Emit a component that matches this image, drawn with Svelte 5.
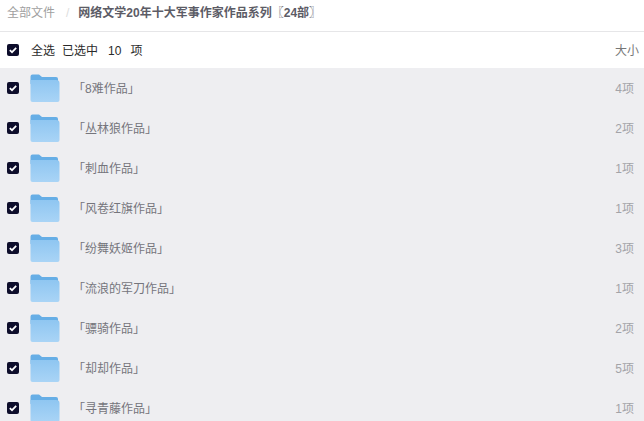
<script lang="ts">
	const rows = [
		{ name: '「8难作品」', size: '4项' },
		{ name: '「丛林狼作品」', size: '2项' },
		{ name: '「刺血作品」', size: '1项' },
		{ name: '「风卷红旗作品」', size: '1项' },
		{ name: '「纷舞妖姬作品」', size: '3项' },
		{ name: '「流浪的军刀作品」', size: '1项' },
		{ name: '「骠骑作品」', size: '2项' },
		{ name: '「却却作品」', size: '5项' },
		{ name: '「寻青藤作品」', size: '1项' }
	];
</script>

{#snippet check()}
	<svg class="check" width="12" height="12" viewBox="0 0 12 12">
		<rect width="12" height="12" rx="2" fill="#0d0d2b" />
		<path d="M2.8 6.2 L5 8.2 L9.2 3.9" fill="none" stroke="#fff" stroke-width="1.7" />
	</svg>
{/snippet}

<div class="page">
	<header class="crumbs">
		<span class="root">全部文件</span>
		<span class="sep">/</span>
		<span class="title">网络文学20年十大军事作家作品系列〖24部〗</span>
	</header>
	<div class="head">
		{@render check()}
		<span class="all">全选</span>
		<span class="count">已选中</span>
		<span class="num">10</span>
		<span class="unit">项</span>
		<span class="size-head">大小</span>
	</div>
	<div class="list">
		{#each rows as row}
			<div class="row">
				{@render check()}
				<svg class="folder" width="30" height="28" viewBox="0 0 30 28">
					<defs>
						<linearGradient id="fg" x1="0" y1="0" x2="0" y2="1">
							<stop offset="0" stop-color="#8fc6f1" />
							<stop offset="1" stop-color="#a9d4f6" />
						</linearGradient>
					</defs>
					<path d="M0.5 2.5 Q0.5 0.5 2.5 0.5 H9 L12 3 H26 Q28 3 28 5 V10 H0.5 Z" fill="#66aee6" />
					<path d="M0.5 6 H26 Q29.5 6 29.5 9 V26 Q29.5 28 27.5 28 H2.5 Q0.5 28 0.5 26 Z" fill="url(#fg)" />
				</svg>
				<span class="name">{row.name}</span>
				<span class="size">{row.size}</span>
			</div>
		{/each}
	</div>
</div>

<style>
	:global(body) {
		margin: 0;
		background: #fff;
		overflow: hidden;
	}
	.page {
		width: 644px;
		height: 421px;
		overflow: hidden;
		font-family: "Liberation Sans", "Noto Sans CJK SC", sans-serif;
		font-size: 12px;
		line-height: 16px;
	}
	.crumbs {
		height: 32px;
		box-sizing: border-box;
		border-bottom: 1px solid #e6e6e8;
		padding: 0 0 6px 7px;
		display: flex;
		align-items: center;
		color: #a0a0a0;
	}
	.sep {
		margin: 0 9px 0 11px;
		color: #ddd;
	}
	.title {
		font-weight: 700;
		color: #5c5c66;
	}
	.head {
		height: 36px;
		display: flex;
		align-items: center;
		padding: 0 5px 0 7px;
		color: #2a2a2a;
	}
	.head span {
		padding-top: 2px;
	}
	.all {
		margin-left: 12px;
	}
	.count {
		margin-left: 7px;
	}
	.num {
		margin-left: 10px;
	}
	.unit {
		margin-left: 9px;
	}
	.size-head {
		margin-left: auto;
		color: #777;
	}
	.list {
		background: #eeeef1;
	}
	.row {
		height: 40px;
		display: flex;
		align-items: center;
		padding: 0 10px 0 7px;
	}
	.folder {
		margin-left: 11px;
		flex: none;
	}
	.name {
		margin-left: 13px;
		padding-top: 2px;
		color: #75757c;
	}
	.size {
		margin-left: auto;
		padding-top: 2px;
		color: #a3a3a8;
	}
	.check {
		flex: none;
	}
</style>
